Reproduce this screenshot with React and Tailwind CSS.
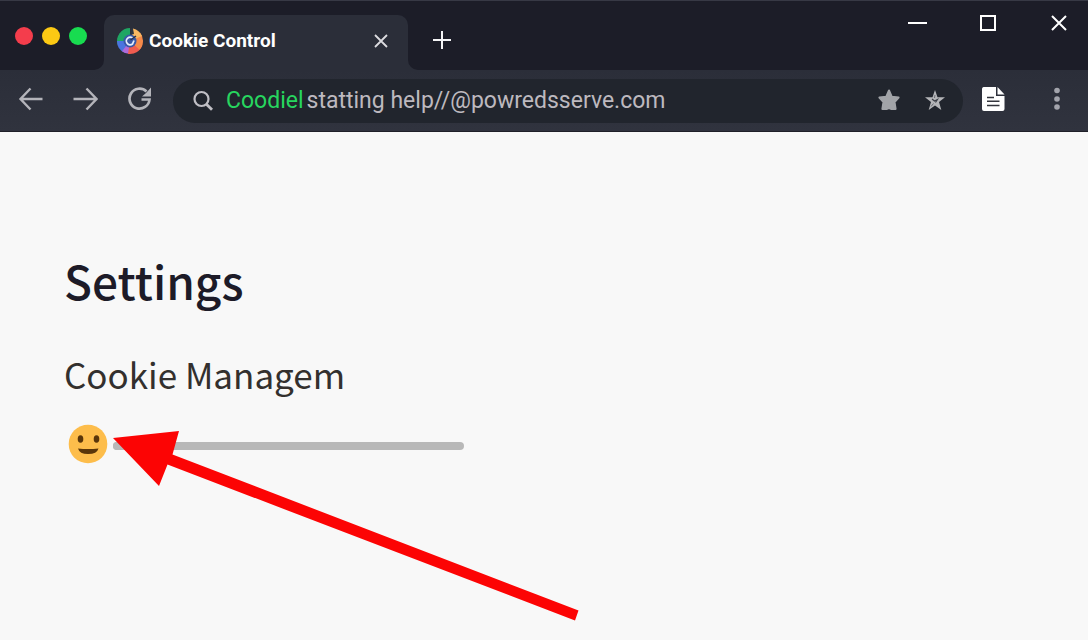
import { useState } from 'react';

const lights = [
  { label: 'Close', color: 'bg-[#f43d4c]' },
  { label: 'Minimize', color: 'bg-[#fcc914]' },
  { label: 'Zoom', color: 'bg-[#18dc50]' },
];

const Favicon = () => (
  <svg viewBox="0 0 28 28" className="size-7 shrink-0" aria-hidden="true">
    <path d="M14 14 L14 1 A13 13 0 0 0 1.5 17.5 Z" fill="#1fa663" />
    <path d="M14 14 L1 14 A13 13 0 0 0 9 26 Z" fill="#4b74e0" />
    <path d="M14 14 L6 24.2 A13 13 0 0 0 14 27 Z" fill="#b06ad8" />
    <path d="M14 14 L12 26.9 A13 13 0 0 0 26.5 17.5 Z" fill="#ef5c50" />
    <path d="M14 14 L23.5 22.8 A13 13 0 0 0 24 5.6 Z" fill="#f58a4a" />
    <path d="M14 14 L26 9 A13 13 0 0 0 17 1.4 L16 7 Z" fill="#f9b862" />
    <path d="M14.5 1 L17 1.4 L18 7 L14.5 8 Z" fill="#2c3440" />
    <circle cx="14" cy="14" r="6.5" fill="#3858a8" />
    <path d="M17 11.5 A3.8 3.8 0 1 0 16.5 17 L18 13.5" fill="none" stroke="#e6ecfb" strokeWidth="1.8" />
    <path d="M14.5 13 L20 9" fill="none" stroke="#27304a" strokeWidth="1.4" />
  </svg>
);

const Tab = ({ title }) => (
  <div className="relative flex h-[55px] w-[304px] min-w-0 items-center rounded-t-[10px] bg-[#2b2e39] pr-4 pb-1 pl-3">
    <svg viewBox="0 0 10 10" className="absolute bottom-0 -left-2.5 size-2.5" aria-hidden="true">
      <path d="M10 0 V10 H0 A10 10 0 0 0 10 0 Z" fill="#2b2e39" />
    </svg>
    <svg viewBox="0 0 10 10" className="absolute -right-2.5 bottom-0 size-2.5" aria-hidden="true">
      <path d="M0 0 V10 H10 A10 10 0 0 1 0 0 Z" fill="#2b2e39" />
    </svg>
    <Favicon />
    <span className="ml-[5px] truncate text-[19px] leading-6 font-bold text-white">{title}</span>
    <button type="button" aria-label="Close tab" className="ml-auto p-1">
      <svg viewBox="0 0 14 14" className="size-3.5" fill="none" stroke="#dcdce0" strokeWidth="1.8">
        <path d="M1 1 L13 13 M13 1 L1 13" />
      </svg>
    </button>
  </div>
);

const TabStrip = () => (
  <div className="flex h-[70px] items-end border-t border-[#373945] bg-[#1c1d28]">
    <div className="mb-[25px] flex w-[104px] shrink-0 gap-[9px] pl-[15px]">
      {lights.map((light) => (
        <button key={light.label} type="button" aria-label={light.label} className={`size-[18px] rounded-full ${light.color}`} />
      ))}
    </div>
    <Tab title="Cookie Control" />
    <button type="button" aria-label="New tab" className="mb-5 ml-6">
      <svg viewBox="0 0 20 20" className="size-5" fill="none" stroke="#f4f4f6" strokeWidth="2">
        <path d="M10 1 V19 M1 10 H19" />
      </svg>
    </button>
    <div className="mr-[19px] ml-auto flex gap-[51px] self-start pt-3">
      <button type="button" aria-label="Minimize window">
        <svg viewBox="0 0 20 20" className="size-5" stroke="#ffffff" strokeWidth="2">
          <path d="M1 10 H20" />
        </svg>
      </button>
      <button type="button" aria-label="Maximize window">
        <svg viewBox="0 0 20 20" className="size-5" fill="none" stroke="#ffffff" strokeWidth="2">
          <rect x="3" y="3" width="14" height="14" />
        </svg>
      </button>
      <button type="button" aria-label="Close window">
        <svg viewBox="0 0 20 20" className="size-5" fill="none" stroke="#ffffff" strokeWidth="2">
          <path d="M3 3 L17 17 M17 3 L3 17" />
        </svg>
      </button>
    </div>
  </div>
);

const AddressBar = () => {
  const [address, setAddress] = useState('statting help//@powredsserve.com');

  return (
    <div className="ml-[21px] flex h-11 min-w-0 flex-1 items-center rounded-full bg-[#21252d] pr-4 pl-[19px]">
      <svg viewBox="0 0 22 22" className="size-[22px] shrink-0" fill="none" stroke="#c0bfc5" strokeWidth="2.2" aria-hidden="true">
        <circle cx="9.5" cy="9" r="7" />
        <path d="M14.2 14 L20 19.8" strokeWidth="2.8" />
      </svg>
      <label htmlFor="address" className="ml-3 text-[23px] leading-7 text-[#27d65f]">Coodiel</label>
      <input
        id="address"
        value={address}
        onChange={(e) => setAddress(e.target.value)}
        className="ml-[3px] min-w-0 flex-1 bg-transparent text-[23px] leading-7 text-[#bdb9bf] outline-none"
      />
      <button type="button" aria-label="Bookmark" className="pb-0.5">
        <svg viewBox="0 0 24 24" className="size-6" fill="#a2a4a8" stroke="#a2a4a8" strokeWidth="2" strokeLinejoin="round">
          <path d="M12 2.5 L14.8 8.8 L21.6 9.5 L17.5 14 L18.6 21 H14.5 L12 20 L9.5 21 H5.4 L6.5 14 L2.4 9.5 L9.2 8.8 Z" />
        </svg>
      </button>
      <button type="button" aria-label="Favorites" className="ml-[22px] pb-0.5">
        <svg viewBox="0 0 24 24" className="size-6" fill="#b4b5b8">
          <path d="M12 2 L14.5 9.3 H22 L16 14 L18.3 22 L12 17.6 L5.7 22 L8 14 L2 9.3 H9.5 Z" />
          <path d="M9 11 L11.5 13 L14.5 11.5 L12.5 14.5" fill="none" stroke="#3a3d45" strokeWidth="1.1" />
          <path d="M12 7 L11.5 10 M8 18.5 L10.5 15.5" fill="none" stroke="#686b72" strokeWidth="1" />
        </svg>
      </button>
    </div>
  );
};

const Toolbar = () => (
  <div className="flex h-[62px] items-center border-b border-[#1f2028] bg-gradient-to-b from-[#2b2e39] to-[#30333e] pl-[18px]">
    <button type="button" aria-label="Back" className="pb-[3px]">
      <svg viewBox="0 0 26 24" className="h-6 w-[26px]" fill="none" stroke="#b4b4ba" strokeWidth="2.4">
        <path d="M24.5 12 H2.5 M12.5 1.5 L2.5 12 L12.5 22.5" />
      </svg>
    </button>
    <button type="button" aria-label="Forward" className="ml-7 pb-[3px]">
      <svg viewBox="0 0 26 24" className="h-6 w-[26px]" fill="none" stroke="#b4b4ba" strokeWidth="2.4">
        <path d="M1.5 12 H24.500 M14.500 1.500 L24.500 12 L14.500 22.500" />
      </svg>
    </button>
    <button type="button" aria-label="Reload" className="ml-7 pb-[3px]">
      <svg viewBox="0 0 26 24" className="h-6 w-[26px]" fill="none" stroke="#b4b4ba" strokeWidth="2.7">
        <path d="M20.5 4.500 A10 10 0 1 0 23.500 12.500 H15.500" />
        <path d="M25 0.500 V9.500 H16 L20 6 Z" fill="#b4b4ba" stroke="none" />
      </svg>
    </button>
    <AddressBar />
    <button type="button" aria-label="Reading list" className="ml-[18px] pb-[3px]">
      <svg viewBox="0 0 24 24" className="size-6">
        <path d="M2.5 0 H15 V9 H23.5 V22 A2 2 0 0 1 21.5 24 H3 A2 2 0 0 1 1 22 V2 A2 2 0 0 1 2.5 0 Z" fill="#ffffff" />
        <path d="M16.5 0 L23.5 7.500 H16.5 Z" fill="#ffffff" />
        <path d="M6 10.5 H13 M6 14.3 H18.5 M6 18.5 H18.5" stroke="#33353d" strokeWidth="1.5" />
      </svg>
    </button>
    <button type="button" aria-label="Menu" className="mr-[21px] ml-[42px] pb-[3px]">
      <svg viewBox="0 0 20 24" className="h-6 w-5" fill="#a3a4ac">
        <circle cx="10" cy="3.5" r="2.8" />
        <circle cx="10" cy="12" r="2.8" />
        <circle cx="10" cy="20" r="2.8" />
      </svg>
    </button>
  </div>
);

const Smiley = () => (
  <svg viewBox="0 0 40 40" className="size-10 shrink-0" aria-hidden="true">
    <circle cx="20" cy="20" r="19.3" fill="#fdbd4b" />
    <ellipse cx="12.5" cy="15" rx="2.8" ry="3.8" fill="#5a360a" />
    <ellipse cx="28.5" cy="15" rx="2.8" ry="3.8" fill="#5a360a" />
    <path d="M10 24.5 Q20 25.5 30.5 24.5 Q29 30 20 30 Q11.5 30 10 24.5 Z" fill="#5a360a" />
  </svg>
);

const Pointer = () => (
  <svg viewBox="0 0 466 190" className="pointer-events-none absolute top-[23px] left-[49px] h-[190px] w-[466px]" fill="#fc0404" aria-hidden="true">
    <path d="M0 7 L66 0 L59.5 23.5 L465.5 179.5 L462 189.5 L54.5 33.5 L46 55 Z" />
  </svg>
);

const Settings = () => {
  const [level, setLevel] = useState(0);

  return (
    <main className="flex-1 px-16 pt-28 font-['Noto_Sans_CJK_SC','Noto_Sans',sans-serif]">
      <h1 className="text-[46px] leading-[72px] font-medium text-[#1d1b28]">Settings</h1>
      <label htmlFor="cookies" className="mt-[30px] block text-[35px] leading-[56px] text-[#33302e]">Cookie Managem</label>
      <div className="relative mt-1.5 flex items-center gap-[5px] pt-4 pl-1">
        <Smiley />
        <input
          id="cookies"
          type="range"
          value={level}
          onChange={(e) => setLevel(e.target.value)}
          className="mt-1 h-2 w-[351px] appearance-none rounded-full bg-[#b8b8b8] [&::-webkit-slider-thumb]:size-2 [&::-webkit-slider-thumb]:appearance-none [&::-webkit-slider-thumb]:rounded-full [&::-webkit-slider-thumb]:bg-[#b8b8b8]"
        />
        <Pointer />
      </div>
    </main>
  );
};

const App = () => (
  <div className="flex min-h-screen flex-col overflow-hidden bg-[#f8f8f8] font-[Roboto,sans-serif]">
    <header>
      <TabStrip />
      <Toolbar />
    </header>
    <Settings />
  </div>
);

export default App;
